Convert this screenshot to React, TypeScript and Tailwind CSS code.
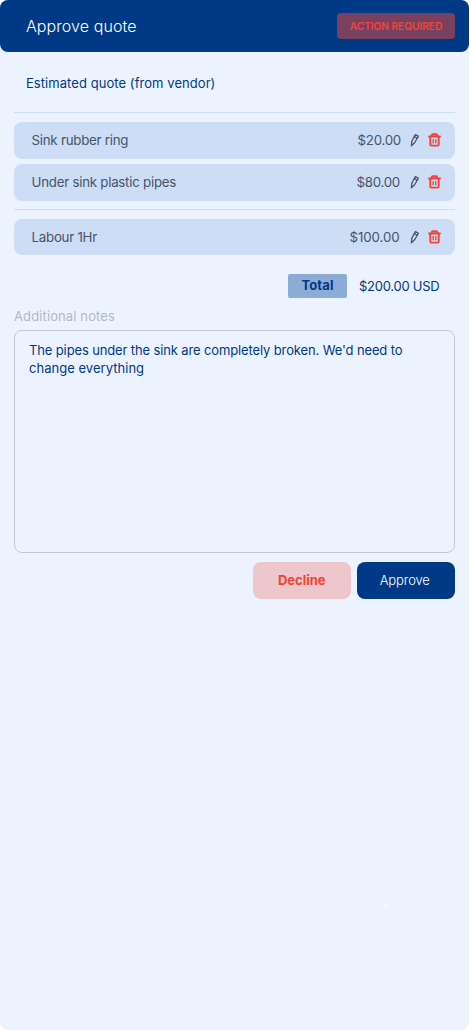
import React from "react"

type QuoteItem = {
  name: string
  price: string
  priceClass: string
}

const parts: QuoteItem[] = [
  { name: "Sink rubber ring", price: "$20.00", priceClass: "mr-[9px]" },
  { name: "Under sink plastic pipes", price: "$80.00", priceClass: "mr-[10px]" },
]

const labour: QuoteItem[] = [
  { name: "Labour 1Hr", price: "$100.00", priceClass: "mr-[10.5px] tracking-[-0.1px]" },
]

function PencilIcon() {
  return (
    <svg width="9" height="14" viewBox="0 0 9 14" fill="none" stroke="#475467" strokeWidth="1.3" strokeLinejoin="round" strokeLinecap="round">
      <path d="M5.4 1.6 8.4 3.2 4.6 9.8 1.4 12.7 1.8 8.3Z" />
      <path d="M4.4 3.6 7.2 5.2" />
    </svg>
  )
}

function TrashIcon() {
  return (
    <svg width="13" height="14" viewBox="0 0 13 14" fill="none" stroke="#f04438" strokeWidth="1.9" strokeLinejoin="round" strokeLinecap="round">
      <path d="M1 3.5H12M3.9 3.3V1.9Q3.9 1.2 4.6 1.2H8.4Q9.1 1.2 9.1 1.9V3.3" />
      <path d="M2.3 3.7V11.6Q2.3 12.6 3.3 12.6H9.7Q10.7 12.6 10.7 11.6V3.7" />
      <path d="M5.2 6.6V9.7M7.8 6.6V9.7" strokeWidth="1.4" />
    </svg>
  )
}

function QuoteRow({ item }: { item: QuoteItem }) {
  return (
    <div className="flex h-[36.5px] items-center rounded-lg bg-[#cdddf6] pl-[17.5px] pr-3.5 text-[13.3px] tracking-[-0.25px] text-[#475467]">
      <span className="flex-1 pt-0.5">{item.name}</span>
      <span className={`pt-0.5 ${item.priceClass}`}>{item.price}</span>
      <span className="mr-[9px]">
        <PencilIcon />
      </span>
      <TrashIcon />
    </div>
  )
}

export default function App() {
  return (
    <div className="min-h-screen bg-white font-['Inter',sans-serif]">
      <div className="relative h-[1030px] w-[469px] rounded-lg bg-[#ecf3ff] text-[#003985]">
        {/* Header */}
        <div className="flex h-[52px] items-center justify-between rounded-lg bg-[#003985] pl-[26px] pr-3.5">
          <h1 className="text-[16px] font-light tracking-[0.08px] text-white">Approve quote</h1>
          <span className="flex h-[26px] w-[118px] items-center justify-center rounded bg-[#79405f] pt-px text-[10.2px] font-semibold tracking-[-0.06px] text-[#f04438]">
            ACTION REQUIRED
          </span>
        </div>

        <div className="px-3.5">
          <h2 className="flex h-[60px] items-center pl-3 pt-[3px] text-[13px] tracking-[0.06px]">Estimated quote (from vendor)</h2>

          {/* Line items */}
          <div className="flex flex-col gap-[5.5px] border-t border-[#cdddf6] pt-[9px] pb-[8.5px]">
            {parts.map((item) => (
              <QuoteRow key={item.name} item={item} />
            ))}
          </div>
          <div className="border-t border-[#cdddf6] pt-[8.5px]">
            {labour.map((item) => (
              <QuoteRow key={item.name} item={item} />
            ))}
          </div>

          {/* Total */}
          <div className="mt-[18.5px] flex h-6 items-center justify-end pr-[15.5px] text-[13px]">
            <span className="mr-3 flex h-6 w-[59px] items-center justify-center rounded-xs bg-[#8cabd6] pt-px font-bold tracking-[0.1px]">Total</span>
            <span className="pt-0.5 tracking-[-0.25px]">$200.00 USD</span>
          </div>

          {/* Notes */}
          <label className="mt-1.5 flex h-6 items-center pt-[3px] text-[13px] tracking-[0.12px] text-[#b3b8c6]">Additional notes</label>
          <div className="mt-0.5 h-[223px] rounded-lg border border-[#c4c8d5] px-3.5 pt-2.5 text-[13px] leading-[18px] tracking-[-0.13px]">
            The pipes under the sink are completely broken. We'd need to{" "}
            <span className="tracking-[0.03px]">change everything</span>
          </div>

          <div className="mt-[9px] flex justify-end gap-[5.5px] text-[13px]">
            <button className="h-[37px] w-[98.5px] rounded-lg bg-[#edc7cc] pt-0.5 font-bold text-[#f04438]">Decline</button>
            <button className="h-[37px] w-[98.5px] rounded-lg bg-[#003985] pt-0.5 pr-0.5 font-light tracking-[-0.1px] text-white">Approve</button>
          </div>
        </div>

        <span className="absolute left-[385px] top-[903px] h-[5px] w-0.5 bg-white/60" />
      </div>
    </div>
  )
}
